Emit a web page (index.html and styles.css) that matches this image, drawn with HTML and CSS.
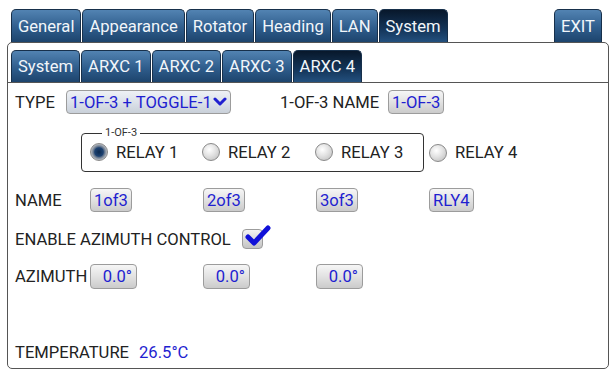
FILE: index.html
```html
<!DOCTYPE html>
<html>
<head>
<meta charset="utf-8">
<link rel="stylesheet" href="styles.css">
</head>
<body>
<div class="app">
  <div class="tabbar">
    <div class="tab">General</div>
    <div class="tab">Appearance</div>
    <div class="tab">Rotator</div>
    <div class="tab">Heading</div>
    <div class="tab">LAN</div>
    <div class="tab active">System</div>
    <div class="tab exit">EXIT</div>
  </div>
  <div class="panel">
    <div class="subtabbar">
      <div class="tab sub">System</div>
      <div class="tab sub">ARXC 1</div>
      <div class="tab sub">ARXC 2</div>
      <div class="tab sub">ARXC 3</div>
      <div class="tab sub active">ARXC 4</div>
    </div>
    <div class="content">
      <div class="row row-type">
        <span class="label type-label">TYPE</span>
        <div class="btn select">1-OF-3 + TOGGLE-1<svg class="chev" width="14" height="10" viewBox="0 0 14 10"><polyline points="2,2 7,7 12,2" fill="none" stroke="#1f1fd0" stroke-width="3" stroke-linecap="round" stroke-linejoin="round"/></svg></div>
        <span class="label name-label">1-OF-3 NAME</span>
        <div class="btn">1-OF-3</div>
      </div>
      <div class="row row-radios">
        <fieldset class="group">
          <legend>1-OF-3</legend>
          <div class="radios">
            <div class="radio-item w1"><span class="radio on"></span><span class="label">RELAY 1</span></div>
            <div class="radio-item w2"><span class="radio"></span><span class="label">RELAY 2</span></div>
            <div class="radio-item"><span class="radio"></span><span class="label">RELAY 3</span></div>
          </div>
        </fieldset>
        <div class="radio-item r4"><span class="radio"></span><span class="label">RELAY 4</span></div>
      </div>
      <div class="row grid row-name">
        <span class="label">NAME</span>
        <div class="cell"><div class="btn">1of3</div></div>
        <div class="cell"><div class="btn">2of3</div></div>
        <div class="cell"><div class="btn">3of3</div></div>
        <div class="cell"><div class="btn">RLY4</div></div>
      </div>
      <div class="row row-enable">
        <span class="label">ENABLE AZIMUTH CONTROL</span>
        <span class="checkbox"><svg class="check" width="28" height="24" viewBox="0 0 28 24"><polyline points="4,12 10,18 24,3" fill="none" stroke="#1010d8" stroke-width="5" stroke-linecap="round" stroke-linejoin="round"/></svg></span>
      </div>
      <div class="row grid row-az">
        <span class="label">AZIMUTH</span>
        <div class="cell"><div class="btn az">0.0°</div></div>
        <div class="cell"><div class="btn az">0.0°</div></div>
        <div class="cell"><div class="btn az">0.0°</div></div>
      </div>
      <div class="row row-temp">
        <span class="label">TEMPERATURE</span>
        <span class="value">26.5°C</span>
      </div>
    </div>
  </div>
</div>
</body>
</html>
```
FILE: styles.css
```css
html, body {
  margin: 0;
  padding: 0;
  background: #ffffff;
}
body {
  width: 616px;
  height: 375px;
  overflow: hidden;
  font-family: Roboto, "Liberation Sans", sans-serif;
  font-size: 16.6px;
  color: #222222;
}
.app {
  display: flex;
  flex-direction: column;
  height: 375px;
}
.tabbar {
  display: flex;
  gap: 1px;
  padding: 9px 14px 0 11px;
  height: 33px;
}
.tab {
  box-sizing: border-box;
  height: 33px;
  padding: 0 6px;
  display: flex;
  align-items: center;
  color: #f2f6fa;
  background: linear-gradient(#5283b2, #2f5d8c 55%, #1d446d);
  border: 1px solid #17304b;
  border-bottom: none;
  border-radius: 5px 5px 0 0;
  white-space: nowrap;
}
.tab.active {
  background: linear-gradient(#08182b, #143559 60%, #23507e);
}
.tab.exit {
  margin-left: auto;
}
.panel {
  margin: 0 7px 0 7px;
  height: 327px;
  box-sizing: border-box;
  border: 1px solid #555555;
  border-radius: 5px;
  display: flex;
  flex-direction: column;
}
.subtabbar {
  display: flex;
  gap: 1px;
  padding: 7px 0 0 3px;
  border-bottom: 1px solid #555555;
}
.tab.sub {
  height: 32px;
  padding: 0 6px;
}
.content {
  flex: 1;
  display: flex;
  flex-direction: column;
  padding: 0 0 0 7px;
}
.row {
  display: flex;
  align-items: center;
}
.label {
  white-space: nowrap;
}
.btn {
  box-sizing: border-box;
  height: 24px;
  padding: 0 3px;
  display: inline-flex;
  align-items: center;
  color: #1f1fd0;
  background: linear-gradient(#f6f6f6, #e2e2e2 50%, #cbcbcb);
  border: 1px solid #9c9c9c;
  border-radius: 4px;
  white-space: nowrap;
}
.row-type {
  margin-top: 7px;
  height: 24px;
}
.type-label {
  width: 51px;
}
.select {
  width: 165px;
  padding: 0 3px;
  background: linear-gradient(#eef1f5, #dce2ea 50%, #c9d0d9);
  justify-content: space-between;
}
.chev {
  margin-left: 1px;
}
.name-label {
  margin-left: 49px;
  width: 108px;
}
.row-radios {
  margin-top: 13px;
}
.group {
  margin: 0 0 0 66px;
  width: 343px;
  box-sizing: border-box;
  padding: 0 8px 6px 8px;
  border: 1px solid #333333;
  border-radius: 4px;
}
.group legend {
  font-size: 11px;
  line-height: 12px;
  padding: 0 3px;
  margin-left: 12px;
  color: #333333;
}
.radios {
  display: flex;
  height: 26px;
  align-items: center;
}
.radio-item {
  display: flex;
  align-items: center;
  gap: 8px;
}
.radio-item.w1 {
  width: 112px;
}
.radio-item.w2 {
  width: 113px;
}
.radio-item.r4 {
  margin-left: 5px;
  margin-top: 6px;
}
.radio {
  box-sizing: border-box;
  width: 18px;
  height: 18px;
  border-radius: 50%;
  border: 1px solid #8a8a8a;
  background: radial-gradient(circle at 40% 35%, #ffffff, #e2e2e2 45%, #b9b9b9);
}
.radio.on {
  background: radial-gradient(circle, #0d2a4e 0, #1d4272 38%, #5f7189 48%, #b8bcc2 70%, #8d9298 100%);
}
.grid {
  display: grid;
  grid-template-columns: 75px 113px 113px 113px auto;
  align-items: center;
}
.cell {
  display: flex;
}
.row-name {
  margin-top: 16px;
  height: 24px;
}
.row-enable {
  margin-top: 15px;
  height: 24px;
}
.checkbox {
  position: relative;
  margin-left: 11px;
  box-sizing: border-box;
  width: 21px;
  height: 20px;
  border: 1px solid #9c9c9c;
  border-radius: 4px;
  background: linear-gradient(#f3f3f3, #d6d6d6 60%, #c4c4c4);
}
.check {
  position: absolute;
  left: 1px;
  top: -5px;
}
.row-az {
  margin-top: 13px;
  height: 25px;
}
.btn.az {
  height: 25px;
  width: 47px;
  justify-content: flex-end;
  padding: 0 4px 0 0;
}
.row-temp {
  margin-top: auto;
  margin-bottom: 6px;
  height: 20px;
}
.value {
  margin-left: 10px;
  color: #1f1fd0;
}
```
